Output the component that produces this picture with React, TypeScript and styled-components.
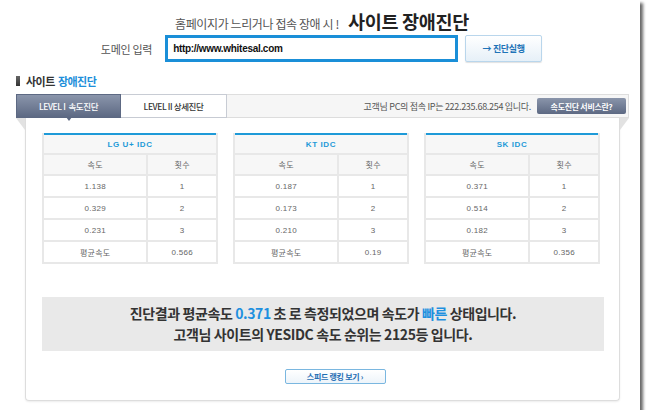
import { createGlobalStyle, styled } from 'styled-components'

const GlobalStyle = createGlobalStyle`
    body {
        margin: 0;
        background: #fff;
        font-family: "Liberation Sans", "Noto Sans CJK KR", sans-serif;
    }
`

const StyledWindow = styled.div`
    width: 640px;
    height: 410px;
    background: #fff;
    box-shadow: 3px 3px 3px rgba(0, 0, 0, 0.6);
    display: flex;
    flex-direction: column;
`

const StyledTitleRow = styled.div`
    display: flex;
    justify-content: center;
    align-items: baseline;
    gap: 9px;
    padding: 8px 0 0 4px;
    height: 24px;
    font-family: "Noto Sans CJK KR", sans-serif;
`

const StyledSubTitle = styled.span`
    font-size: 12px;
    color: #555;
    letter-spacing: -0.4px;
`

const StyledMainTitle = styled.span`
    font-size: 18.5px;
    font-weight: 700;
    color: #222;
    letter-spacing: -0.3px;
`

const StyledDomainRow = styled.div`
    display: flex;
    justify-content: center;
    align-items: center;
    margin-top: 3px;
    padding-left: 3px;
    height: 27px;
`

const StyledLabel = styled.span`
    font-family: "Noto Sans CJK KR", sans-serif;
    font-size: 11px;
    color: #555;
    margin-right: 13px;
    letter-spacing: -0.3px;
`

const StyledInput = styled.div`
    box-sizing: border-box;
    width: 293px;
    height: 27px;
    border: 3px solid #1a8fd8;
    display: flex;
    align-items: center;
    padding-left: 5px;
    font-size: 10px;
    font-weight: 700;
    color: #111;
    letter-spacing: -0.3px;
`

const StyledRunButton = styled.div`
    box-sizing: border-box;
    width: 77px;
    height: 27px;
    margin-left: 7px;
    border: 1px solid #b9d6ec;
    border-radius: 2px;
    background: linear-gradient(#ffffff, #e6f0f8);
    box-shadow: 0 1px 1px rgba(0, 0, 0, 0.12);
    display: flex;
    justify-content: center;
    align-items: center;
    font-family: "Noto Sans CJK KR", sans-serif;
    font-size: 9px;
    font-weight: 700;
    color: #1f74b8;
    letter-spacing: -0.3px;
`

const StyledHeading = styled.div`
    display: flex;
    align-items: center;
    margin-top: 12px;
    padding-left: 16px;
    height: 14px;
    font-family: "Noto Sans CJK KR", sans-serif;
    font-size: 11px;
    font-weight: 700;
    color: #333;
    letter-spacing: -0.5px;
`

const StyledHeadingBar = styled.span`
    width: 4px;
    height: 10px;
    background: linear-gradient(#666, #333);
    margin-right: 6px;
`

const StyledBlue = styled.span`
    color: #1e8fda;
    margin-left: 3px;
`

const StyledTabBar = styled.div`
    display: flex;
    align-items: stretch;
    margin: 6px 11px 0 16px;
    height: 24px;
`

const StyledTab = styled.div<{ $active?: boolean }>`
    box-sizing: border-box;
    position: relative;
    width: ${p => (p.$active ? '105px' : '106px')};
    display: flex;
    justify-content: center;
    align-items: center;
    font-family: "Noto Sans CJK KR", sans-serif;
    font-size: 8.5px;
    font-weight: 500;
    letter-spacing: -0.4px;
    color: ${p => (p.$active ? '#fff' : '#333')};
    background: ${p => (p.$active ? 'linear-gradient(#8a95ab, #5d6983)' : '#fff')};
    border: 1px solid ${p => (p.$active ? '#5d6983' : '#c8ccd4')};
    border-left: ${p => (p.$active ? undefined : 'none')};
`

const StyledPointer = styled.span`
    position: absolute;
    left: 50%;
    bottom: -4px;
    margin-left: -3px;
    border-left: 3px solid transparent;
    border-right: 3px solid transparent;
    border-top: 4px solid #5d6983;
`

const StyledTabInfo = styled.div`
    box-sizing: border-box;
    flex: 1;
    display: flex;
    justify-content: flex-end;
    align-items: center;
    gap: 6px;
    padding-right: 2px;
    background: #f6f6f6;
    border: 1px solid #dedede;
    border-left: none;
    font-family: "Noto Sans CJK KR", sans-serif;
    font-size: 9px;
    color: #555;
    letter-spacing: -0.3px;
`

const StyledServiceButton = styled.div`
    width: 89px;
    height: 16px;
    border-radius: 2px;
    background: linear-gradient(#8a95ab, #5d6983);
    display: flex;
    justify-content: center;
    align-items: center;
    color: #fff;
    font-weight: 700;
    font-size: 8px;
`

const StyledPanel = styled.div`
    box-sizing: border-box;
    position: relative;
    margin: 0 20px 0 25px;
    height: 283px;
    border: 1px solid #dddddd;
    border-top: none;
    border-radius: 0 0 4px 4px;
    box-shadow: 0 1px 2px rgba(0, 0, 0, 0.08);
    padding: 15px 0 0 16px;
    display: flex;
    flex-direction: column;
`

const StyledFold = styled.span<{ $side: 'left' | 'right' }>`
    position: absolute;
    top: 0;
    ${p => (p.$side === 'left' ? 'left: -10px;' : 'right: -10px;')}
    width: 0;
    height: 0;
    border-top: 12px solid #e2e2e2;
    ${p => (p.$side === 'left'
        ? 'border-left: 9px solid transparent;'
        : 'border-right: 9px solid transparent;')}
`

const StyledTables = styled.div`
    display: flex;
    gap: 15px;
`

const StyledTable = styled.table`
    width: 176px;
    border-collapse: collapse;
    border-top: 2px solid #1e9ad8;
    table-layout: fixed;
`

const StyledCell = styled.td<{ $head?: boolean }>`
    border: 2px solid #e8e8e8;
    height: ${p => (p.$head ? '19px' : '20px')};
    padding: 0;
    text-align: center;
    background: ${p => (p.$head ? '#f7f7f7' : '#fff')};
    font-family: "Liberation Sans", "Noto Sans CJK KR", sans-serif;
    font-size: 8px;
    color: #666;
    letter-spacing: 0.3px;
`

const StyledCaption = styled.td`
    border: 2px solid #e8e8e8;
    border-top: none;
    height: 18px;
    padding: 0;
    text-align: center;
    background: #f7f7f7;
    font-size: 8px;
    font-weight: 700;
    color: #1e9ad8;
    letter-spacing: 0.6px;
`

const StyledResult = styled.div`
    margin-top: 33px;
    width: 562px;
    height: 54px;
    background: #e9e9e9;
    display: flex;
    flex-direction: column;
    justify-content: center;
    align-items: center;
    font-family: "Noto Sans CJK KR", sans-serif;
    font-size: 14px;
    font-weight: 700;
    line-height: 21px;
    color: #333;
    letter-spacing: -0.4px;
`

const StyledResultBlue = styled.span`
    color: #1e90df;
`

const StyledButtonRow = styled.div`
    display: flex;
    justify-content: center;
    width: 562px;
    padding-left: 12px;
    margin-top: 18px;
`

const StyledRankButton = styled.div`
    box-sizing: border-box;
    width: 101px;
    height: 15px;
    border: 1px solid #7ab7e0;
    border-radius: 2px;
    background: linear-gradient(#ffffff, #edf4fa);
    display: flex;
    justify-content: center;
    align-items: center;
    font-family: "Noto Sans CJK KR", sans-serif;
    font-size: 8px;
    font-weight: 700;
    color: #1f6db3;
    letter-spacing: -0.3px;
`

const idcs = [
    { name: 'LG U+ IDC', speeds: ['1.138', '0.329', '0.231'], avg: '0.566' },
    { name: 'KT IDC', speeds: ['0.187', '0.173', '0.210'], avg: '0.19' },
    { name: 'SK IDC', speeds: ['0.371', '0.514', '0.182'], avg: '0.356' },
]

function IdcTable({ name, speeds, avg }: { name: string; speeds: string[]; avg: string }) {
    return (
        <StyledTable>
            <colgroup>
                <col style={{ width: '60%' }} />
                <col style={{ width: '40%' }} />
            </colgroup>
            <tbody>
                <tr>
                    <StyledCaption colSpan={2}>{name}</StyledCaption>
                </tr>
                <tr>
                    <StyledCell $head>속도</StyledCell>
                    <StyledCell $head>횟수</StyledCell>
                </tr>
                {speeds.map((s, i) => (
                    <tr key={i}>
                        <StyledCell>{s}</StyledCell>
                        <StyledCell>{i + 1}</StyledCell>
                    </tr>
                ))}
                <tr>
                    <StyledCell>평균속도</StyledCell>
                    <StyledCell>{avg}</StyledCell>
                </tr>
            </tbody>
        </StyledTable>
    )
}

export default function App() {
    return (
        <>
            <GlobalStyle />
            <StyledWindow>
                <StyledTitleRow>
                    <StyledSubTitle>홈페이지가 느리거나 접속 장애 시 !</StyledSubTitle>
                    <StyledMainTitle>사이트 장애진단</StyledMainTitle>
                </StyledTitleRow>
                <StyledDomainRow>
                    <StyledLabel>도메인 입력</StyledLabel>
                    <StyledInput>http://www.whitesal.com</StyledInput>
                    <StyledRunButton>→ 진단실행</StyledRunButton>
                </StyledDomainRow>
                <StyledHeading>
                    <StyledHeadingBar />
                    사이트<StyledBlue>장애진단</StyledBlue>
                </StyledHeading>
                <StyledTabBar>
                    <StyledTab $active>
                        LEVEL I &nbsp;속도진단
                        <StyledPointer />
                    </StyledTab>
                    <StyledTab>LEVEL II 상세진단</StyledTab>
                    <StyledTabInfo>
                        고객님 PC의 접속 IP는 222.235.68.254 입니다.
                        <StyledServiceButton>속도진단 서비스란?</StyledServiceButton>
                    </StyledTabInfo>
                </StyledTabBar>
                <StyledPanel>
                    <StyledFold $side="left" />
                    <StyledFold $side="right" />
                    <StyledTables>
                        {idcs.map(idc => (
                            <IdcTable key={idc.name} {...idc} />
                        ))}
                    </StyledTables>
                    <StyledResult>
                        <div>
                            진단결과 평균속도 <StyledResultBlue>0.371</StyledResultBlue> 초 로 측정되었으며 속도가{' '}
                            <StyledResultBlue>빠른</StyledResultBlue> 상태입니다.
                        </div>
                        <div>고객님 사이트의 YESIDC 속도 순위는 2125등 입니다.</div>
                    </StyledResult>
                    <StyledButtonRow>
                        <StyledRankButton>스피드 랭킹 보기 ›</StyledRankButton>
                    </StyledButtonRow>
                </StyledPanel>
            </StyledWindow>
        </>
    )
}
